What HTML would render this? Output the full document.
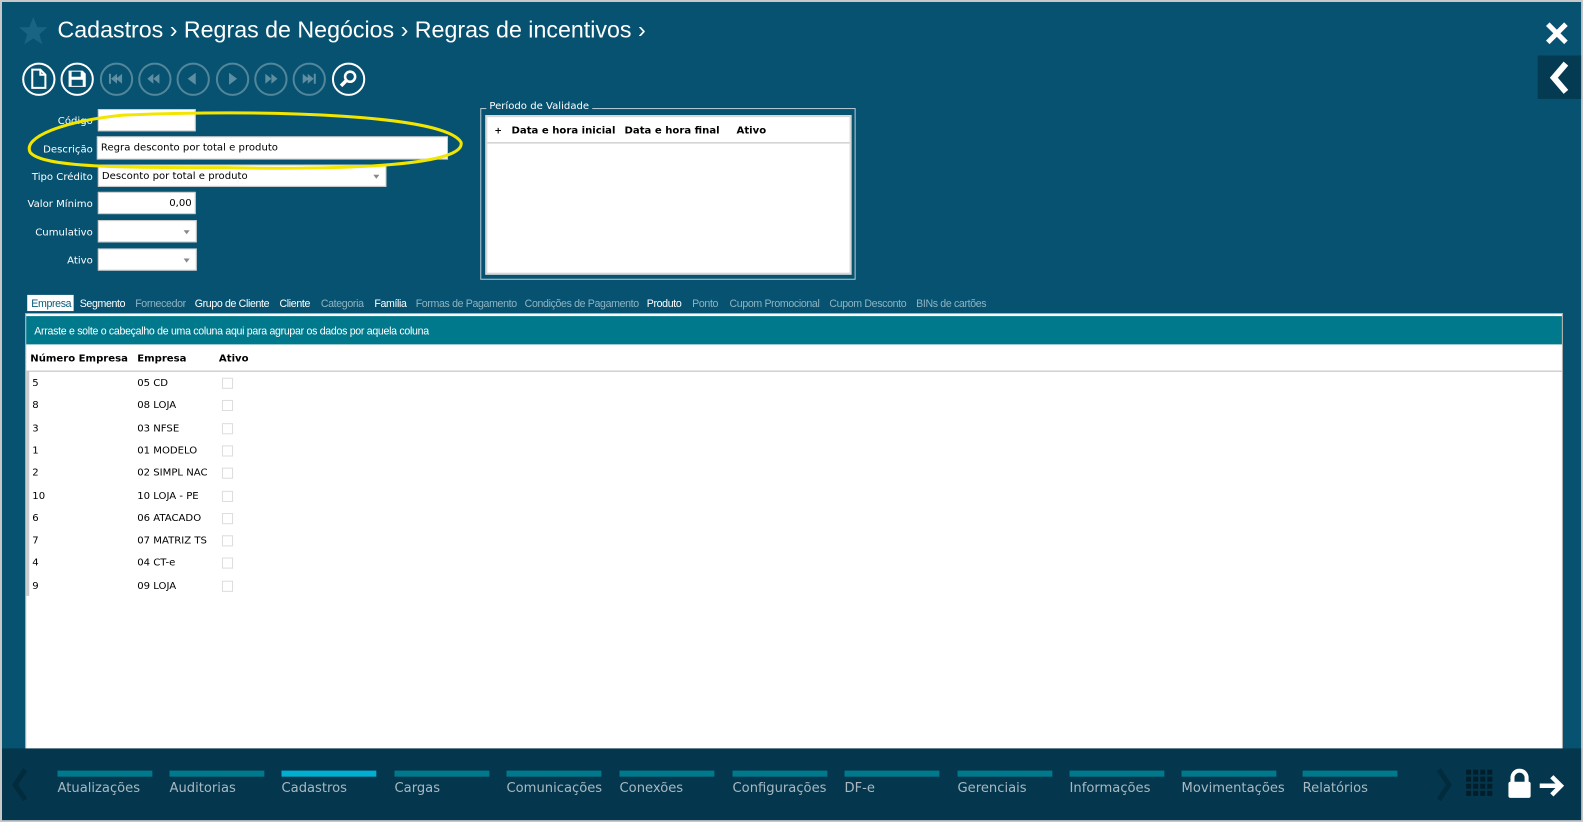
<!DOCTYPE html>
<html><head><meta charset="utf-8"><style>
*{margin:0;padding:0;box-sizing:border-box}
body{width:1583px;height:822px;overflow:hidden;background:#c8c8c8;font-family:"DejaVu Sans","Liberation Sans",sans-serif;position:relative}
#main{position:absolute;left:2px;top:2px;width:1565px;height:810px;background:#075270;transform:scale(1.009,1.01);transform-origin:0 0}
.a{position:absolute;white-space:nowrap}
.crumb{color:#fff;font-family:"Liberation Sans",sans-serif;font-size:23px;top:14px}
.btn{position:absolute;top:60px;width:33px;height:33px;border:2.5px solid #fff;border-radius:50%}
.dis{border-color:rgba(255,255,255,.3)}
.lbl{color:#fff;font-size:10px;text-align:right;width:90px;left:0}
.in{position:absolute;background:#fff;border:1px solid #ccc;height:22px;font-size:10px;padding:5px 3px 0;color:#000}
.dd:after{content:"";position:absolute;right:6px;top:9px;border:3px solid transparent;border-top:4px solid #888}
.tab{top:293px;font-family:"Liberation Sans",sans-serif;font-size:10.5px;letter-spacing:-.35px;color:#8fb3c2}
.tab.w{color:#fff}
.row{left:30px;font-size:10px;color:#000}
.cb{position:absolute;left:218px;width:11px;height:11px;border:1px solid #ddd}
.nav{top:771px;font-size:13px;color:#a9b9c2}
.bar{position:absolute;top:761px;width:94px;height:6px;background:#00798c}
</style></head><body>
<div id="main">
<svg class="a" style="left:16px;top:14px" width="30" height="30" viewBox="0 0 30 30"><polygon points="15,1 19,11 29,11 21,18 24,28 15,22 6,28 9,18 1,11 11,11" fill="#1a6483"/></svg>
<div class="a crumb" style="left:55px">Cadastros ›  Regras de Negócios ›  Regras de incentivos ›</div>
<svg class="a" style="left:1528px;top:18px" width="26" height="26" viewBox="0 0 26 26"><path d="M4 4L22 22M22 4L4 22" stroke="#fff" stroke-width="5"/></svg>
<div class="a" style="left:1522px;top:53px;width:43px;height:43px;background:#043b52"></div>
<svg class="a" style="left:1530px;top:58px" width="26" height="34" viewBox="0 0 26 34"><path d="M20 3L8 17L20 31" stroke="#fff" stroke-width="6" fill="none"/></svg>

<div class="btn" style="left:20px"><svg width="28" height="28" viewBox="0 0 28 28"><path d="M8 5h8l5 5v13H8z M16 5v5h5" stroke="#fff" stroke-width="2" fill="none"/></svg></div>
<div class="btn" style="left:58px"><svg width="28" height="28" viewBox="0 0 28 28"><path d="M6 6h14l3 3v13H6z" fill="#fff"/><rect x="9" y="7" width="9" height="5" fill="#075270"/><rect x="9" y="15" width="11" height="6" fill="#075270"/></svg></div>
<div class="btn dis" style="left:97px"><svg width="28" height="28" viewBox="0 0 28 28" fill="rgba(255,255,255,.35)"><rect x="7" y="9" width="2" height="10"/><polygon points="9,14 15,9 15,19"/><polygon points="14,14 20,9 20,19"/></svg></div>
<div class="btn dis" style="left:135px"><svg width="28" height="28" viewBox="0 0 28 28" fill="rgba(255,255,255,.35)"><polygon points="7,14 13,9 13,19"/><polygon points="13,14 19,9 19,19"/></svg></div>
<div class="btn dis" style="left:173px"><svg width="28" height="28" viewBox="0 0 28 28" fill="rgba(255,255,255,.35)"><polygon points="9,14 17,8 17,20"/></svg></div>
<div class="btn dis" style="left:212px"><svg width="28" height="28" viewBox="0 0 28 28" fill="rgba(255,255,255,.35)"><polygon points="19,14 11,8 11,20"/></svg></div>
<div class="btn dis" style="left:250px"><svg width="28" height="28" viewBox="0 0 28 28" fill="rgba(255,255,255,.35)"><polygon points="21,14 15,9 15,19"/><polygon points="15,14 9,9 9,19"/></svg></div>
<div class="btn dis" style="left:288px"><svg width="28" height="28" viewBox="0 0 28 28" fill="rgba(255,255,255,.35)"><rect x="19" y="9" width="2" height="10"/><polygon points="19,14 13,9 13,19"/><polygon points="14,14 8,9 8,19"/></svg></div>
<div class="btn" style="left:327px"><svg width="28" height="28" viewBox="0 0 28 28"><circle cx="16" cy="12" r="5" stroke="#fff" stroke-width="2.5" fill="none"/><path d="M12 16L7 21" stroke="#fff" stroke-width="3.5"/></svg></div>

<div class="a lbl" style="top:113px">Código</div>
<div class="in" style="left:95px;top:106px;width:97px"></div>
<div class="a lbl" style="top:141px">Descrição</div>
<div class="in" style="left:94px;top:133px;width:348px;height:23px">Regra desconto por total e produto</div>
<div class="a lbl" style="top:168px">Tipo Crédito</div>
<div class="in dd" style="left:95px;top:161px;width:286px">Desconto por total e produto</div>
<div class="a lbl" style="top:195px">Valor Mínimo</div>
<div class="in" style="left:95px;top:188px;width:97px;text-align:right">0,00</div>
<div class="a lbl" style="top:223px">Cumulativo</div>
<div class="in dd" style="left:95px;top:216px;width:98px"></div>
<div class="a lbl" style="top:251px">Ativo</div>
<div class="in dd" style="left:95px;top:244px;width:98px"></div>
<svg class="a" style="left:20px;top:104px" width="445" height="68" viewBox="0 0 445 68"><path d="M100 8C250 2 420 8 435 35C440 60 300 62 200 60C100 60 20 60 8 45C0 30 40 14 100 8" stroke="#f2e600" stroke-width="3" fill="none"/></svg>

<div class="a" style="left:474px;top:105px;width:372px;height:170px;border:1px solid #b8ccd6"></div>
<div class="a" style="left:480px;top:98px;background:#075270;color:#fff;font-size:10px;padding:0 3px">Período de Validade</div>
<div class="a" style="left:479px;top:112px;width:363px;height:158px;background:#fff;border:2px solid #d8d8d8"></div>
<div class="a" style="left:481px;top:114px;width:359px;height:26px;border-bottom:1px solid #bbb"></div>
<div class="a" style="left:488px;top:123px;font-size:9px;font-weight:bold">+</div>
<div class="a" style="left:505px;top:122px;font-size:10px;font-weight:bold">Data e hora inicial</div>
<div class="a" style="left:617px;top:122px;font-size:10px;font-weight:bold">Data e hora final</div>
<div class="a" style="left:728px;top:122px;font-size:10px;font-weight:bold">Ativo</div>

<div class="a" style="left:25px;top:290px;width:46px;height:16px;background:#fff"></div>
<div class="a tab" style="left:29px;color:#0b5a7a">Empresa</div>
<div class="a tab w" style="left:77px">Segmento</div>
<div class="a tab" style="left:132px">Fornecedor</div>
<div class="a tab w" style="left:191px">Grupo de Cliente</div>
<div class="a tab w" style="left:275px">Cliente</div>
<div class="a tab" style="left:316px">Categoria</div>
<div class="a tab w" style="left:369px">Família</div>
<div class="a tab" style="left:410px">Formas de Pagamento</div>
<div class="a tab" style="left:518px">Condições de Pagamento</div>
<div class="a tab w" style="left:639px">Produto</div>
<div class="a tab" style="left:684px">Ponto</div>
<div class="a tab" style="left:721px">Cupom Promocional</div>
<div class="a tab" style="left:820px">Cupom Desconto</div>
<div class="a tab" style="left:906px">BINs de cartões</div>

<div class="a" style="left:23px;top:308px;width:1524px;height:434px;background:#fff;border:1px solid #aaa"></div>
<div class="a" style="left:24px;top:311px;width:1522px;height:28px;background:#00798c"></div>
<div class="a" style="left:32px;top:320px;color:#fff;font-family:'Liberation Sans',sans-serif;font-size:10.5px;letter-spacing:-.3px">Arraste e solte o cabeçalho de uma coluna aqui para agrupar os dados por aquela coluna</div>
<div class="a" style="left:24px;top:339px;width:1522px;height:27px;border-bottom:1px solid #bbb"></div>
<div class="a" style="left:24px;top:366px;width:3px;height:222px;background:#ccc"></div>
<div class="a" style="left:28px;top:348px;font-size:10px;font-weight:bold">Número Empresa</div>
<div class="a" style="left:134px;top:348px;font-size:10px;font-weight:bold">Empresa</div>
<div class="a" style="left:215px;top:348px;font-size:10px;font-weight:bold">Ativo</div>

<div class="a row" style="top:372px">5</div><div class="a row" style="left:134px;top:372px">05 CD</div><div class="cb" style="top:372px"></div>
<div class="a row" style="top:394px">8</div><div class="a row" style="left:134px;top:394px">08 LOJA</div><div class="cb" style="top:394px"></div>
<div class="a row" style="top:417px">3</div><div class="a row" style="left:134px;top:417px">03 NFSE</div><div class="cb" style="top:417px"></div>
<div class="a row" style="top:439px">1</div><div class="a row" style="left:134px;top:439px">01 MODELO</div><div class="cb" style="top:439px"></div>
<div class="a row" style="top:461px">2</div><div class="a row" style="left:134px;top:461px">02 SIMPL NAC</div><div class="cb" style="top:461px"></div>
<div class="a row" style="top:484px">10</div><div class="a row" style="left:134px;top:484px">10 LOJA - PE</div><div class="cb" style="top:484px"></div>
<div class="a row" style="top:506px">6</div><div class="a row" style="left:134px;top:506px">06 ATACADO</div><div class="cb" style="top:506px"></div>
<div class="a row" style="top:528px">7</div><div class="a row" style="left:134px;top:528px">07 MATRIZ TS</div><div class="cb" style="top:528px"></div>
<div class="a row" style="top:550px">4</div><div class="a row" style="left:134px;top:550px">04 CT-e</div><div class="cb" style="top:550px"></div>
<div class="a row" style="top:573px">9</div><div class="a row" style="left:134px;top:573px">09 LOJA</div><div class="cb" style="top:573px"></div>

<div class="a" style="left:0;top:739px;width:1565px;height:71px;background:#04374d"></div>
<svg class="a" style="left:8px;top:758px" width="20" height="34" viewBox="0 0 20 34"><path d="M15 2L5 17L15 32" stroke="#022c3e" stroke-width="5" fill="none"/></svg>
<div class="bar" style="left:55px"></div><div class="a nav" style="left:55px">Atualizações</div>
<div class="bar" style="left:166px"></div><div class="a nav" style="left:166px">Auditorias</div>
<div class="bar" style="left:277px;background:#00aed0"></div><div class="a nav" style="left:277px">Cadastros</div>
<div class="bar" style="left:389px"></div><div class="a nav" style="left:389px">Cargas</div>
<div class="bar" style="left:500px"></div><div class="a nav" style="left:500px">Comunicações</div>
<div class="bar" style="left:612px"></div><div class="a nav" style="left:612px">Conexões</div>
<div class="bar" style="left:724px"></div><div class="a nav" style="left:724px">Configurações</div>
<div class="bar" style="left:835px"></div><div class="a nav" style="left:835px">DF-e</div>
<div class="bar" style="left:947px"></div><div class="a nav" style="left:947px">Gerenciais</div>
<div class="bar" style="left:1058px"></div><div class="a nav" style="left:1058px">Informações</div>
<div class="bar" style="left:1169px"></div><div class="a nav" style="left:1169px">Movimentações</div>
<div class="bar" style="left:1289px"></div><div class="a nav" style="left:1289px">Relatórios</div>
<svg class="a" style="left:1419px;top:758px" width="20" height="34" viewBox="0 0 20 34"><path d="M5 2L15 17L5 32" stroke="#022c3e" stroke-width="5" fill="none"/></svg>
<svg class="a" style="left:1451px;top:760px" width="28" height="28" viewBox="0 0 28 28" fill="#021e2b"><rect x="0" y="0" width="5" height="5"/><rect x="7" y="0" width="5" height="5"/><rect x="14" y="0" width="5" height="5"/><rect x="21" y="0" width="5" height="5"/><rect x="0" y="7" width="5" height="5"/><rect x="7" y="7" width="5" height="5"/><rect x="14" y="7" width="5" height="5"/><rect x="21" y="7" width="5" height="5"/><rect x="0" y="14" width="5" height="5"/><rect x="7" y="14" width="5" height="5"/><rect x="14" y="14" width="5" height="5"/><rect x="21" y="14" width="5" height="5"/><rect x="0" y="21" width="5" height="5"/><rect x="7" y="21" width="5" height="5"/><rect x="14" y="21" width="5" height="5"/><rect x="21" y="21" width="5" height="5"/></svg>
<svg class="a" style="left:1490px;top:759px" width="60" height="30" viewBox="0 0 60 30"><path d="M7 14V9a7 7 0 0 1 14 0v5" stroke="#fff" stroke-width="4" fill="none"/><rect x="3" y="13" width="22" height="16" rx="2" fill="#fff"/><path d="M34 17H55M46 8L55 17L46 26" stroke="#fff" stroke-width="4.5" fill="none"/></svg>
</div>
</body></html>
